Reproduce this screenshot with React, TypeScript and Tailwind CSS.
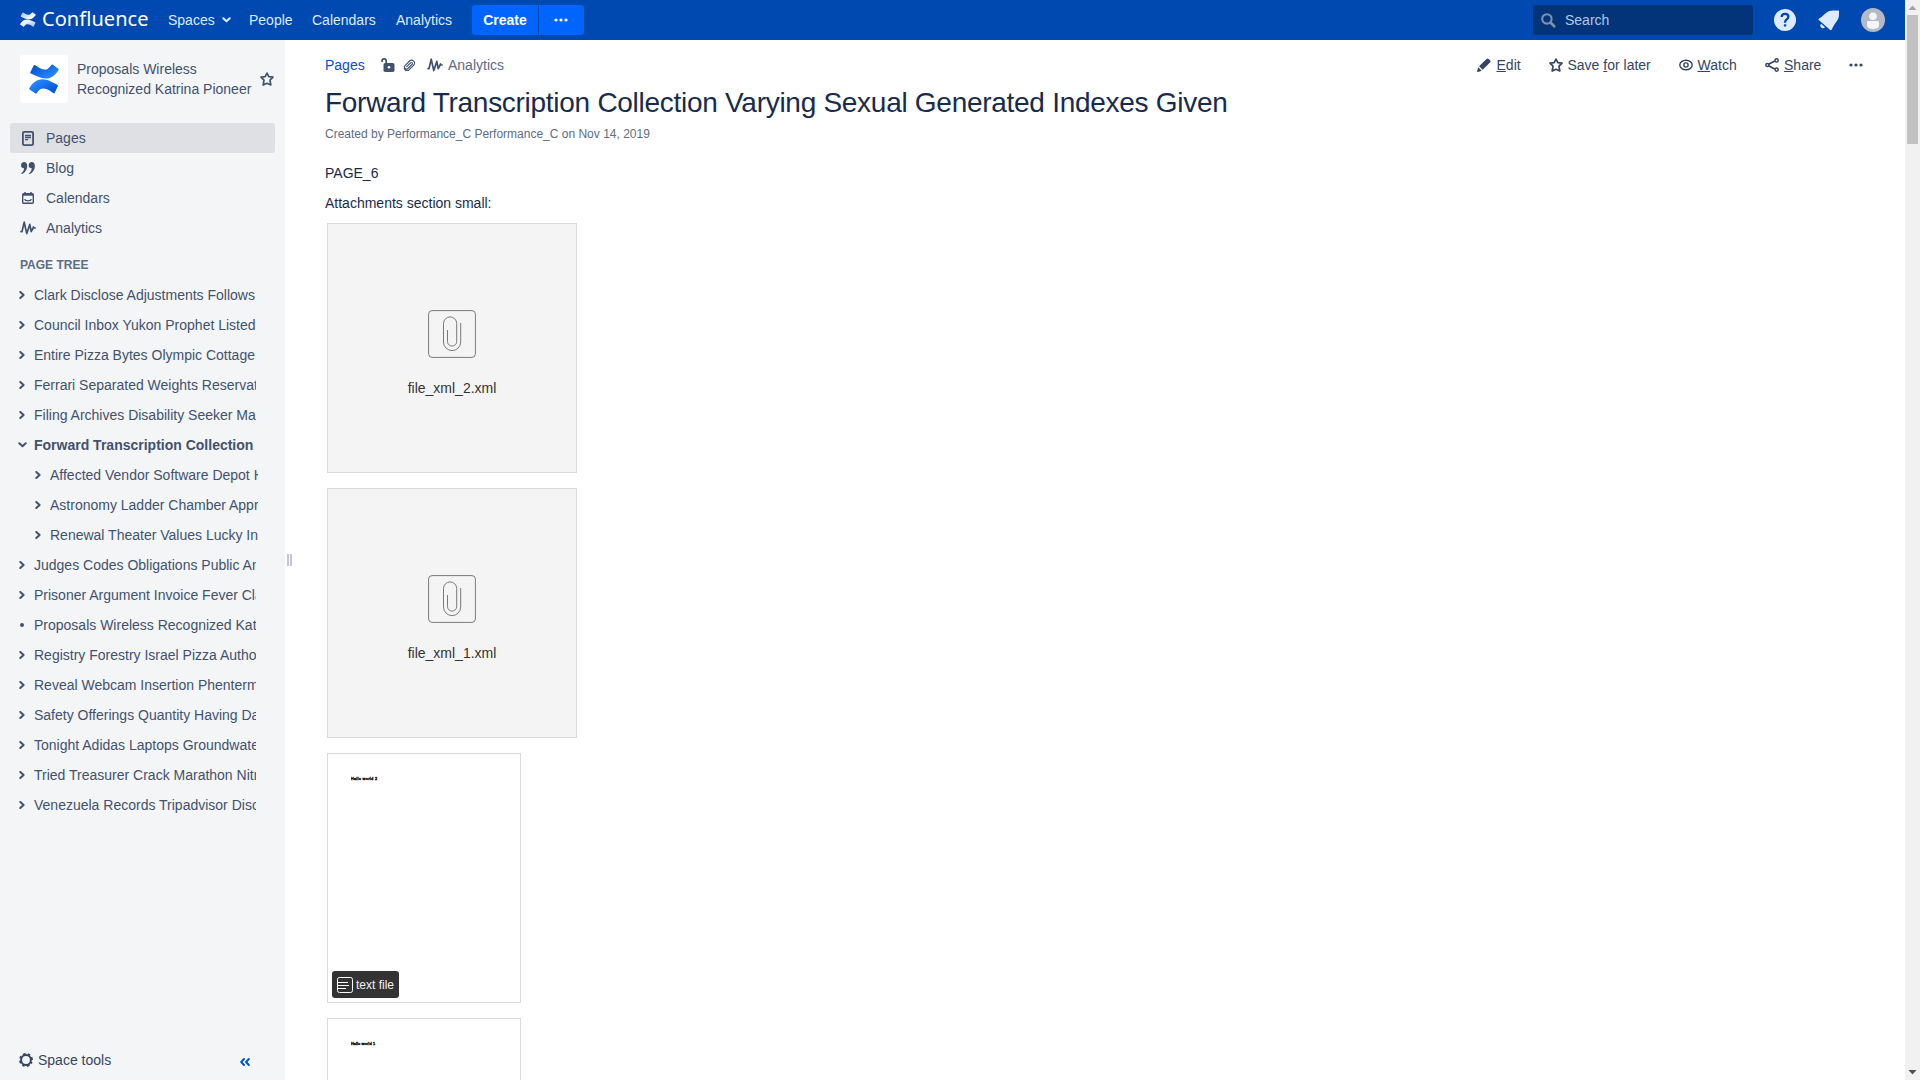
import React from 'react';

type IconProps = { className?: string };

const Pulse = ({ className = '' }: IconProps) => (
  <svg viewBox="0 0 16 14" className={className} fill="none" stroke="currentColor" strokeWidth="1.7" strokeLinecap="round" strokeLinejoin="round">
    <path d="M1 10.600h1L4.200 1.200l2.600 11.400 3-9.200 1.400 7.200L13.600 6l.4 1h1.200" />
  </svg>
);

const Star = ({ className = '' }: IconProps) => (
  <svg viewBox="0 0 14 14" className={className} fill="none" stroke="currentColor" strokeWidth="1.7" strokeLinejoin="round">
    <path d="M7 1.1l1.800 3.500 4.200.5-3 3 .8 4.900L7 11.300 3.200 13l.8-4.900-3-3 4.200-.5z" />
  </svg>
);

const Chevron = ({ className = '' }: IconProps) => (
  <svg viewBox="0 0 6 8" className={className} fill="none" stroke="currentColor" strokeWidth="2" strokeLinecap="round" strokeLinejoin="round">
    <path d="M1.3 1L4.6 4 1.3 7" />
  </svg>
);

const ChevronDown = ({ className = '' }: IconProps) => (
  <svg viewBox="0 0 9 6" className={className} fill="none" stroke="currentColor" strokeWidth="2" strokeLinecap="round" strokeLinejoin="round">
    <path d="M1.3 1.3l3.2 3 3.2-3" />
  </svg>
);

const Dots = ({ className = '' }: IconProps) => (
  <svg viewBox="0 0 14 4" className={className} fill="currentColor">
    <circle cx="2" cy="2" r="1.6" />
    <circle cx="7" cy="2" r="1.6" />
    <circle cx="12" cy="2" r="1.6" />
  </svg>
);

const ConfluenceMark = ({ className = '', id, from, to }: IconProps & { id: string; from: string; to: string }) => (
  <svg viewBox="0 0 30 30" preserveAspectRatio="none" className={className}>
    <defs>
      <linearGradient id={id + 'a'} x1="0" y1="0.2" x2="0.75" y2="0.8">
        <stop offset="0" stopColor={from} />
        <stop offset="1" stopColor={to} />
      </linearGradient>
      <linearGradient id={id + 'b'} x1="1" y1="0.8" x2="0.25" y2="0.2">
        <stop offset="0" stopColor={from} />
        <stop offset="1" stopColor={to} />
      </linearGradient>
    </defs>
    <path fill={`url(#${id}a)`} d="M4.7 1.4 L1.2 8.4 Q1 9.2 1.9 9.6 C7 11.9 11.5 14.600 16.5 14.600 C23 14.600 26.5 10.5 29.6 6 Q30 5.2 29.3 4.8 L23.6 .6 Q22.9 .2 22.3 .9 C19.8 4.4 18.2 5.8 15.2 5.6 C12 5.4 9.2 3.2 5.7 1 Q5 .7 4.7 1.4z" />
    <path fill={`url(#${id}b)`} d="M25.6 28.9 L28.9 21.9 Q29.1 21.1 28.3 20.7 C23 18.2 18.5 15.200 13.8 15.200 C7.2 15.200 3.2 19.4 .3 24.2 Q0 25 .6 25.4 L6.5 29.6 Q7.2 29.9 7.7 29.2 C10 25.5 11.8 24.3 14.8 24.4 C18 24.6 21 26.8 24.6 29.3 Q25.3 29.6 25.6 28.9z" />
  </svg>
);

const PageIcon = () => (
  <svg viewBox="0 0 12 15" className="h-[15px] w-3" fill="none" stroke="currentColor">
    <rect x="0.9" y="0.9" width="10.2" height="13.2" rx="1.3" strokeWidth="1.8" />
    <path d="M3 4.5h6M3 6.5h6M3 8.7h3.2" strokeWidth="1.3" />
  </svg>
);

const QuoteIcon = () => (
  <svg viewBox="0 0 14 12" className="h-3 w-3.5" fill="currentColor">
    <path d="M3.1 0C5 0 6.2 1.5 6.2 3.7 6.2 7.6 4.2 10.7 1 11.9c-.7.2-.9-.5-.4-.9C2.300 9.800 3 8.200 3.100 6.300 1.300 6.400 0 5 0 3.200 0 1.400 1.300 0 3.100 0z" />
    <path d="M10.700 0c1.900 0 3.200 1.500 3.200 3.700 0 3.900-2.100 7-5.200 8.200-.7.2-.9-.5-.4-.9 1.700-1.200 2.400-2.800 2.500-4.700-1.800.1-3.200-1.300-3.200-3.100C7.600 1.400 8.900 0 10.700 0z" />
  </svg>
);

const CalendarIcon = () => (
  <svg viewBox="0 0 12 12" className="h-3 w-3" fill="none" stroke="currentColor">
    <rect x="0.7" y="1.800" width="10.600" height="9.500" rx="1" strokeWidth="1.4" />
    <path d="M.8 2.700h10.400" strokeWidth="2" />
    <path d="M3 0v2M9 0v2" strokeWidth="1.500" />
    <path d="M2.500 7.300c.8 2 6.200 2 7 0" strokeWidth="1.200" />
  </svg>
);

const Header = () => (
  <header className="flex h-10 shrink-0 items-center bg-[#0049b0] pl-5 text-sm text-[#deebff]">
    <ConfluenceMark id="top" from="#a9c3e8" to="#ffffff" className="-mt-px h-[15px] w-4" />
    <span className="ml-1.5 w-[106px] -translate-y-px whitespace-nowrap font-['Noto_Sans',sans-serif] text-[20px] leading-10 tracking-[0.05px] text-white">Confluence</span>
    <span className="ml-5 w-[54px]">Spaces</span>
    <ChevronDown className="h-1.5 w-[9px]" />
    <span className="ml-[18px] w-[63px]">People</span>
    <span className="w-[84px]">Calendars</span>
    <span className="w-[76px]">Analytics</span>
    <span className="flex h-[30px] w-[66px] items-center justify-center rounded-l-[3px] bg-[#0065ff] font-bold text-white">Create</span>
    <span className="ml-px flex h-[30px] w-[45px] items-center justify-center rounded-r-[3px] bg-[#0065ff] pr-[2px] text-white">
      <Dots className="h-1 w-3.5" />
    </span>
    <div className="ml-auto flex h-[30px] w-[220px] items-center rounded-[3px] bg-[#03347a] pl-2 text-[#b3c7e6]">
      <svg viewBox="0 0 15 15" className="h-[15px] w-[15px] text-[#7f90a9]" fill="none" stroke="currentColor">
        <circle cx="5.900" cy="5.900" r="4.700" strokeWidth="2.100" />
        <path d="M9.500 9.500l3.700 3.700" strokeWidth="2.700" strokeLinecap="round" />
      </svg>
      <span className="ml-[9px]">Search</span>
    </div>
    <svg viewBox="0 0 22 22" className="ml-[21px] h-[22px] w-[22px]">
      <circle cx="11" cy="11" r="11" fill="#deebff" />
      <path d="M7.700 8.100c0-2 1.400-3.300 3.400-3.300 1.900 0 3.300 1.200 3.300 2.900 0 2.600-3.300 2.900-3.300 5.300v.7" fill="none" stroke="#0049b0" strokeWidth="2.300" />
      <rect x="9.900" y="15.200" width="2.400" height="2.400" rx=".6" fill="#0049b0" />
    </svg>
    <svg viewBox="0 0 22 21" className="ml-[22px] h-[21px] w-[22px]" fill="#deebff">
      <path d="M.9 8.800C5.200 6.200 7.400 2.600 11.200 1c2.600-1 5.600-.5 8.200-.5h.8q.9 0 .9.900c-.2.900-.1 1.500-.1 2.300.1 2.900-.6 5.100-2.100 7.300-1.900 2.700-3.800 5.300-5.200 8.600-.3.800-.9.900-1.500.4L.8 10c-.500-.4-.5-.9.100-1.200z" />
      <path d="M3.100 13.700a2.600 2.600 0 0 0 3.900 3.600z" />
    </svg>
    <svg viewBox="0 0 24 24" className="mr-5 ml-[21px] h-6 w-6">
      <circle cx="12" cy="12" r="12" fill="#b3bac5" />
      <circle cx="12" cy="8.300" r="3.800" fill="#f4f5f7" />
      <path d="M6 14.200q0-1.200 1.200-1.200h9.600q1.200 0 1.200 1.200V17q0 4-6 4t-6-4z" fill="#f4f5f7" />
    </svg>
  </header>
);

const tree: { t: string; kind?: 'open' | 'child' | 'leaf' }[] = [
  { t: 'Clark Disclose Adjustments Follows' },
  { t: 'Council Inbox Yukon Prophet Listed' },
  { t: 'Entire Pizza Bytes Olympic Cottage' },
  { t: 'Ferrari Separated Weights Reservation' },
  { t: 'Filing Archives Disability Seeker Ma' },
  { t: 'Forward Transcription Collection', kind: 'open' },
  { t: 'Affected Vendor Software Depot H', kind: 'child' },
  { t: 'Astronomy Ladder Chamber Appr', kind: 'child' },
  { t: 'Renewal Theater Values Lucky In', kind: 'child' },
  { t: 'Judges Codes Obligations Public An' },
  { t: 'Prisoner Argument Invoice Fever Cla' },
  { t: 'Proposals Wireless Recognized Katrina', kind: 'leaf' },
  { t: 'Registry Forestry Israel Pizza Author' },
  { t: 'Reveal Webcam Insertion Phentermine' },
  { t: 'Safety Offerings Quantity Having Dat' },
  { t: 'Tonight Adidas Laptops Groundwater' },
  { t: 'Tried Treasurer Crack Marathon Nitro' },
  { t: 'Venezuela Records Tripadvisor Disc' },
];

const nav = [
  { t: 'Pages', icon: <PageIcon />, active: true },
  { t: 'Blog', icon: <QuoteIcon /> },
  { t: 'Calendars', icon: <CalendarIcon /> },
  { t: 'Analytics', icon: <Pulse className="h-3.5 w-4" /> },
];

const Sidebar = () => (
  <aside className="flex w-[285px] shrink-0 flex-col bg-[#f4f5f7] text-sm text-[#42526e]">
    <div className="mt-[15px] flex h-12 items-center pl-5">
      <div className="flex h-12 w-12 items-center justify-center rounded-[3px] bg-white">
        <ConfluenceMark id="space" from="#0052cc" to="#2684ff" className="h-[30px] w-[30px]" />
      </div>
      <div className="ml-[9px] w-[183px] leading-5 whitespace-nowrap">
        Proposals Wireless
        <br />
        Recognized Katrina Pioneer
      </div>
      <Star className="h-3.5 w-3.5" />
    </div>
    <nav className="mx-2.5 mt-5">
      {nav.map((n) => (
        <div key={n.t} className={n.active ? 'flex h-[30px] w-[265px] items-center rounded-[3px] bg-[#dfe0e4]' : 'flex h-[30px] items-center'}>
          <span className="flex w-9 items-center justify-center">{n.icon}</span>
          {n.t}
        </div>
      ))}
    </nav>
    <h5 className="mt-[14px] h-[23px] pl-5 text-xs leading-[17px] font-bold text-[#5e6c84]">PAGE TREE</h5>
    <ul>
      {tree.map((n) => (
        <li key={n.t} className={n.kind === 'child' ? 'flex h-[30px] items-center pl-[33px]' : 'flex h-[30px] items-center pl-[17px]'}>
          <span className="flex w-[17px] shrink-0 pl-px">
            {n.kind === 'open' ? (
              <ChevronDown className="-ml-[0.5px] h-1.5 w-[9px]" />
            ) : n.kind === 'leaf' ? (
              <i className="ml-0.5 h-1 w-1 rounded-full bg-[#42526e]" />
            ) : (
              <Chevron className="ml-px h-2 w-1.5" />
            )}
          </span>
          <span className={n.kind === 'child' ? 'w-[208px] overflow-hidden whitespace-nowrap' : n.kind === 'open' ? 'w-[222px] overflow-hidden font-bold whitespace-nowrap' : 'w-[222px] overflow-hidden whitespace-nowrap'}>{n.t}</span>
        </li>
      ))}
    </ul>
    <div className="mt-auto mb-[9px] flex items-center pl-[19px] text-[#344563]">
      <svg viewBox="0 0 14 14" className="h-3.5 w-3.5" fill="none" stroke="currentColor">
        <circle cx="7" cy="7" r="4.900" strokeWidth="2" />
        <circle cx="7" cy="7" r="6.100" strokeWidth="1.700" strokeDasharray="2.600 2.190" strokeDashoffset="1.300" transform="rotate(22.500 7 7)" />
      </svg>
      <span className="ml-[5px] w-[202px] leading-[22px]">Space tools</span>
      <svg viewBox="0 0 10 8" className="mt-[3px] h-2 w-2.5 text-[#0052cc]" fill="none" stroke="currentColor" strokeWidth="1.900" strokeLinecap="round" strokeLinejoin="round">
        <path d="M4 1L1.200 4 4 7M8.800 1L6 4l2.800 3" />
      </svg>
    </div>
  </aside>
);

const FileCard = ({ name }: { name: string }) => (
  <div className="flex h-[250px] w-[250px] shrink-0 flex-col items-center border border-[#dadada] bg-[#f4f4f4] text-sm text-[#333]">
    <svg viewBox="0 0 48 48" className="mt-[86px] h-12 w-12" fill="none" stroke="#7a7a7a">
      <rect x="0.600" y="0.600" width="46.800" height="46.800" rx="3.500" strokeWidth="1" />
      <path d="M19.500 20v11.500a4.600 4.600 0 0 0 9.200 0V13.500a6.600 6.600 0 0 0-13.200 0V32a8.600 8.600 0 0 0 17.200 0V13" strokeWidth="1" />
    </svg>
    <span className="mt-5 leading-5">{name}</span>
  </div>
);

const DocCard = ({ text, width, label }: { text: string; width: string; label?: string }) => (
  <div className="flex h-[250px] w-[194px] shrink-0 flex-col justify-between border border-[#dadada] bg-white pb-1 pl-1">
    <svg viewBox="0 0 30 6" className="mt-[21px] ml-[19px] h-1.5 w-[30px]">
      <text x="0" y="4.600" fontSize="3.800" fontWeight="bold" fill="#000" stroke="#000" strokeWidth=".3" textLength={width} lengthAdjust="spacing">{text}</text>
    </svg>
    {label && (
      <div className="flex h-[27px] w-[67px] items-center rounded-[3px] bg-[#333] pl-[5px] text-xs text-[#f0f0f0]">
        <svg viewBox="0 0 16 16" className="h-4 w-4 shrink-0" fill="none" stroke="#fff">
          <rect x="0.500" y="0.500" width="15" height="15" rx="2" />
          <path d="M1 5.500h10M1 8.500h11M1 11.500h8" />
        </svg>
        <span className="ml-[3px] whitespace-nowrap">{label}</span>
      </div>
    )}
  </div>
);

const Breadcrumbs = () => (
  <div className="flex h-5 items-center text-sm text-[#344563]">
    <span className="w-14 text-[#0052cc]">Pages</span>
    <svg viewBox="0 0 14 14" className="-ml-[0.5px] h-3.5 w-3.5 text-[#42526e]" fill="none" stroke="currentColor">
      <path d="M1 4V3a2.100 2.100 0 0 1 4.200 0v3" strokeWidth="1.700" />
      <rect x="2.500" y="5" width="11" height="9" rx="1.800" fill="currentColor" stroke="none" />
      <circle cx="8" cy="9.300" r="1.300" fill="#fff" stroke="none" />
    </svg>
    <svg viewBox="0 0 12 12" className="ml-[8.5px] h-3 w-3 text-[#42526e]" fill="none" stroke="currentColor" strokeWidth="1.150" strokeLinecap="round">
      <path d="M3.700 7.700l3.900-3.900a1 1 0 0 1 1.500 1.500L4.900 9.500a2 2 0 0 1-2.900-2.900l4.600-4.600a2.900 2.900 0 0 1 4.100 4.100L6 10.900a2.800 2.800 0 0 1-4.700-1.500" />
    </svg>
    <Pulse className="ml-3 h-3.5 w-4 text-[#42526e]" />
    <span className="ml-[5px] text-[#5e6c84]">Analytics</span>
    <svg viewBox="0 0 14 14" className="ml-auto h-3.5 w-3.5" fill="currentColor">
      <path d="M9.500 1a1.600 1.600 0 0 1 2.200 0l1.300 1.300a1.600 1.600 0 0 1 0 2.200l-7.300 7.300-3.600-3.600zM1.300 9.300l3.400 3.400-3.600 1.200c-.7.200-1.200-.3-1-1z" />
    </svg>
    <span className="ml-[5.5px] w-[52.5px]"><u>E</u>dit</span>
    <Star className="h-3.5 w-3.5" />
    <span className="ml-[4.5px] w-[111.5px]">Save <u>f</u>or later</span>
    <svg viewBox="0 0 14 12" className="h-3 w-3.5" fill="none" stroke="currentColor">
      <ellipse cx="7" cy="6" rx="6.200" ry="4.800" strokeWidth="1.400" />
      <circle cx="7" cy="6" r="2.100" strokeWidth="1.400" />
    </svg>
    <span className="ml-[4.5px] w-[67.5px]"><u>W</u>atch</span>
    <svg viewBox="0 0 14 14" className="h-3.5 w-3.5" fill="none" stroke="currentColor" strokeWidth="1.500">
      <path d="M3.500 6.300l6.300-3.200M3.500 7.700l6.300 3.200" strokeWidth="1.700" />
      <circle cx="2.400" cy="7" r="1.600" />
      <circle cx="11.600" cy="2.400" r="1.600" />
      <circle cx="11.600" cy="11.600" r="1.600" />
    </svg>
    <span className="ml-[5px] w-[65px]"><u>S</u>hare</span>
    <Dots className="mr-[42px] h-1 w-3.5" />
  </div>
);

export default function App() {
  return (
    <div className="flex h-[1080px] w-[1920px] overflow-hidden bg-white font-['Liberation_Sans',Arial,sans-serif]">
      <div className="flex w-[1905px] shrink-0 flex-col">
        <Header />
        <div className="flex min-h-0 flex-1">
          <Sidebar />
          <div className="flex w-10 shrink-0 items-start gap-px pt-[514px] pl-0.5">
            <i className="h-3 w-0.5 bg-[#c1c7d0]" />
            <i className="h-3 w-0.5 bg-[#c1c7d0]" />
          </div>
          <main className="flex min-w-0 flex-1 flex-col overflow-hidden pt-[15px] text-sm text-[#172b4d]">
            <Breadcrumbs />
            <h1 className="mt-3 text-[28px] leading-8 tracking-[-0.28px] whitespace-nowrap">Forward Transcription Collection Varying Sexual Generated Indexes Given</h1>
            <p className="mt-[6px] text-xs leading-[18px] text-[#5e6c84]">Created by Performance_C Performance_C on Nov 14, 2019</p>
            <p className="mt-5 leading-5">PAGE_6</p>
            <p className="mt-2.5 leading-5">Attachments section small:</p>
            <div className="mt-2.5 ml-0.5 flex flex-col gap-[15px]">
              <FileCard name="file_xml_2.xml" />
              <FileCard name="file_xml_1.xml" />
              <DocCard text="Hallo world 2" width="26" label="text file" />
              <DocCard text="Hallo world 1" width="24" label="text file" />
            </div>
          </main>
        </div>
      </div>
      <div className="flex w-[15px] flex-col items-center bg-[#f1f1f1]">
        <svg viewBox="0 0 15 15" className="h-[15px] w-[15px]" fill="#a3a3a3">
          <path d="M7.500 5.500l4 4.500h-8z" />
        </svg>
        <div className="h-[129px] w-[11px] bg-[#c1c1c1]" />
        <svg viewBox="0 0 15 15" className="mt-auto h-[15px] w-[15px]" fill="#505050">
          <path d="M7.500 9.500l4-4.500h-8z" />
        </svg>
      </div>
    </div>
  );
}
